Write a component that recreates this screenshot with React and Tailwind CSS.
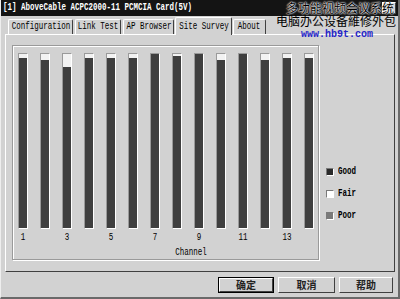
import React from "react";

const mono = { fontFamily: '"Liberation Mono", "DejaVu Sans Mono", monospace' };
const cjk = { fontFamily: '"Noto Sans CJK SC", "Noto Sans", sans-serif' };

const Txt = ({ children, className = "" }) => (
  <span className={`inline-block whitespace-pre text-[10px] leading-[10px] scale-x-[0.75] ${className}`} style={mono}>
    {children}
  </span>
);

const tabs = [
  { label: "Configuration", w: "w-[65px]" },
  { label: "Link Test", w: "w-[46px]" },
  { label: "AP Browser", w: "w-[51px]" },
  { label: "Site Survey", w: "w-[57px]", active: true },
  { label: "About", w: "w-[33px]" },
];

const levels = [170, 168, 161, 170, 170, 170, 174, 172, 174, 168, 174, 168, 170, 170];

const legend = [
  { label: "Good", color: "bg-[#2a2a2a]" },
  { label: "Fair", color: "bg-white" },
  { label: "Poor", color: "bg-[#7a7a7a]" },
];

export default function App() {
  return (
    <div className="relative w-[400px] h-[299px] overflow-hidden bg-[#d2d2d2] flex flex-col border-l border-l-[#eeeeee] border-r-2 border-r-[#6a6a6a] border-b-2 border-b-[#6a6a6a] leading-none">
      {/* title bar */}
      <div className="h-[16px] bg-[#141414] flex items-center justify-between pl-[2px] pr-[2px]">
        <Txt className="text-white font-bold origin-left">[1] AboveCable ACPC2000-11 PCMCIA Card(5V)</Txt>
        <div className="w-[14px] h-[12px] bg-[#d2d2d2] border border-t-white border-l-white border-r-[#404040] border-b-[#404040] flex items-center justify-center text-[9px] leading-none font-bold" style={mono}>
          ×
        </div>
      </div>

      {/* tabs */}
      <div className="relative z-10 h-[19px] pl-[7px] flex items-end gap-[2px]">
        {tabs.map((t) => (
          <div
            key={t.label}
            className={`${t.w} flex items-center justify-center bg-[#d2d2d2] border-t border-l border-r border-t-white border-l-white border-r-[#404040] rounded-t-[2px] ${
              t.active ? "h-[18px] -mx-[1px] px-[1px]" : "h-[15px] mb-px"
            }`}
          >
            <Txt className="text-black">{t.label}</Txt>
          </div>
        ))}
      </div>

      {/* tab page */}
      <div className="-mt-px ml-[4px] w-[390px] h-[238px] border border-t-white border-l-white border-r-[#404040] border-b-[#404040] flex">
        <div className="ml-[6px] mt-[10px] w-[307px] h-[215px] border border-[#9a9a9a] shadow-[inset_1px_1px_0_#ffffff,1px_1px_0_#ffffff] flex flex-col pl-[5px] pt-[7px]">
          <div className="flex gap-[12px] h-[176px]">
            {levels.map((h, i) => (
              <div key={i} className="w-[10px] h-full border border-t-[#9a9a9a] border-l-[#9a9a9a] border-r-white border-b-white bg-[#f2f2f2] flex flex-col justify-end">
                <div className="bg-[#3f3f3f] w-full" style={{ height: h }} />
              </div>
            ))}
          </div>
          <div className="flex gap-[12px] mt-[4px] h-[10px]">
            {levels.map((_, i) => (
              <div key={i} className="w-[10px] h-[10px] flex justify-center overflow-visible">
                {i % 2 === 0 && <Txt className="text-black">{String(i + 1)}</Txt>}
              </div>
            ))}
          </div>
          <div className="mt-[5px] h-[10px] flex pl-[152px]">
            <Txt className="text-black">Channel</Txt>
          </div>
        </div>

        <div className="ml-[7px] pt-[133px] flex flex-col gap-[14px]">
          {legend.map((l) => (
            <div key={l.label} className="flex items-center gap-[4px] h-[8px]">
              <div className={`w-[8px] h-[8px] ${l.color} border border-t-[#7a7a7a] border-l-[#7a7a7a] border-r-white border-b-white`} />
              <Txt className="text-black font-bold origin-left">{l.label}</Txt>
            </div>
          ))}
        </div>
      </div>

      {/* buttons */}
      <div className="mt-[5px] flex justify-end gap-[4px] pr-[5px]">
        <div className="w-[56px] h-[16px] border border-black">
          <div className="w-full h-full border border-t-white border-l-white border-r-[#404040] border-b-[#404040] flex items-center justify-center text-[10px] leading-none font-bold text-[#222]" style={cjk}>
            确定
          </div>
        </div>
        <div className="w-[57px] h-[16px] border border-t-white border-l-white border-r-[#404040] border-b-[#404040] flex items-center justify-center text-[10px] leading-none font-bold text-[#222]" style={cjk}>
          取消
        </div>
        <div className="w-[54px] h-[16px] border border-t-white border-l-white border-r-[#404040] border-b-[#404040] flex items-center justify-center text-[10px] leading-none font-bold text-[#222]" style={cjk}>
          帮助
        </div>
      </div>

      {/* watermark overlay */}
      <div className="absolute right-[4px] top-[1px] text-[12px] leading-[13px] text-black [text-shadow:0_0_1px_#fff,0_0_2px_#fff,0_0_2px_#fff]" style={cjk}>
        多功能视频会议系统
      </div>
      <div className="absolute right-[2px] top-[14px] text-[12px] leading-[13px] text-black" style={cjk}>
        电脑办公设备維修外包
      </div>
      <div className="absolute left-[300px] top-[29px] text-[10px] leading-[11px] text-[#2424c8] font-bold" style={mono}>
        www.hb9t.com
      </div>
    </div>
  );
}
